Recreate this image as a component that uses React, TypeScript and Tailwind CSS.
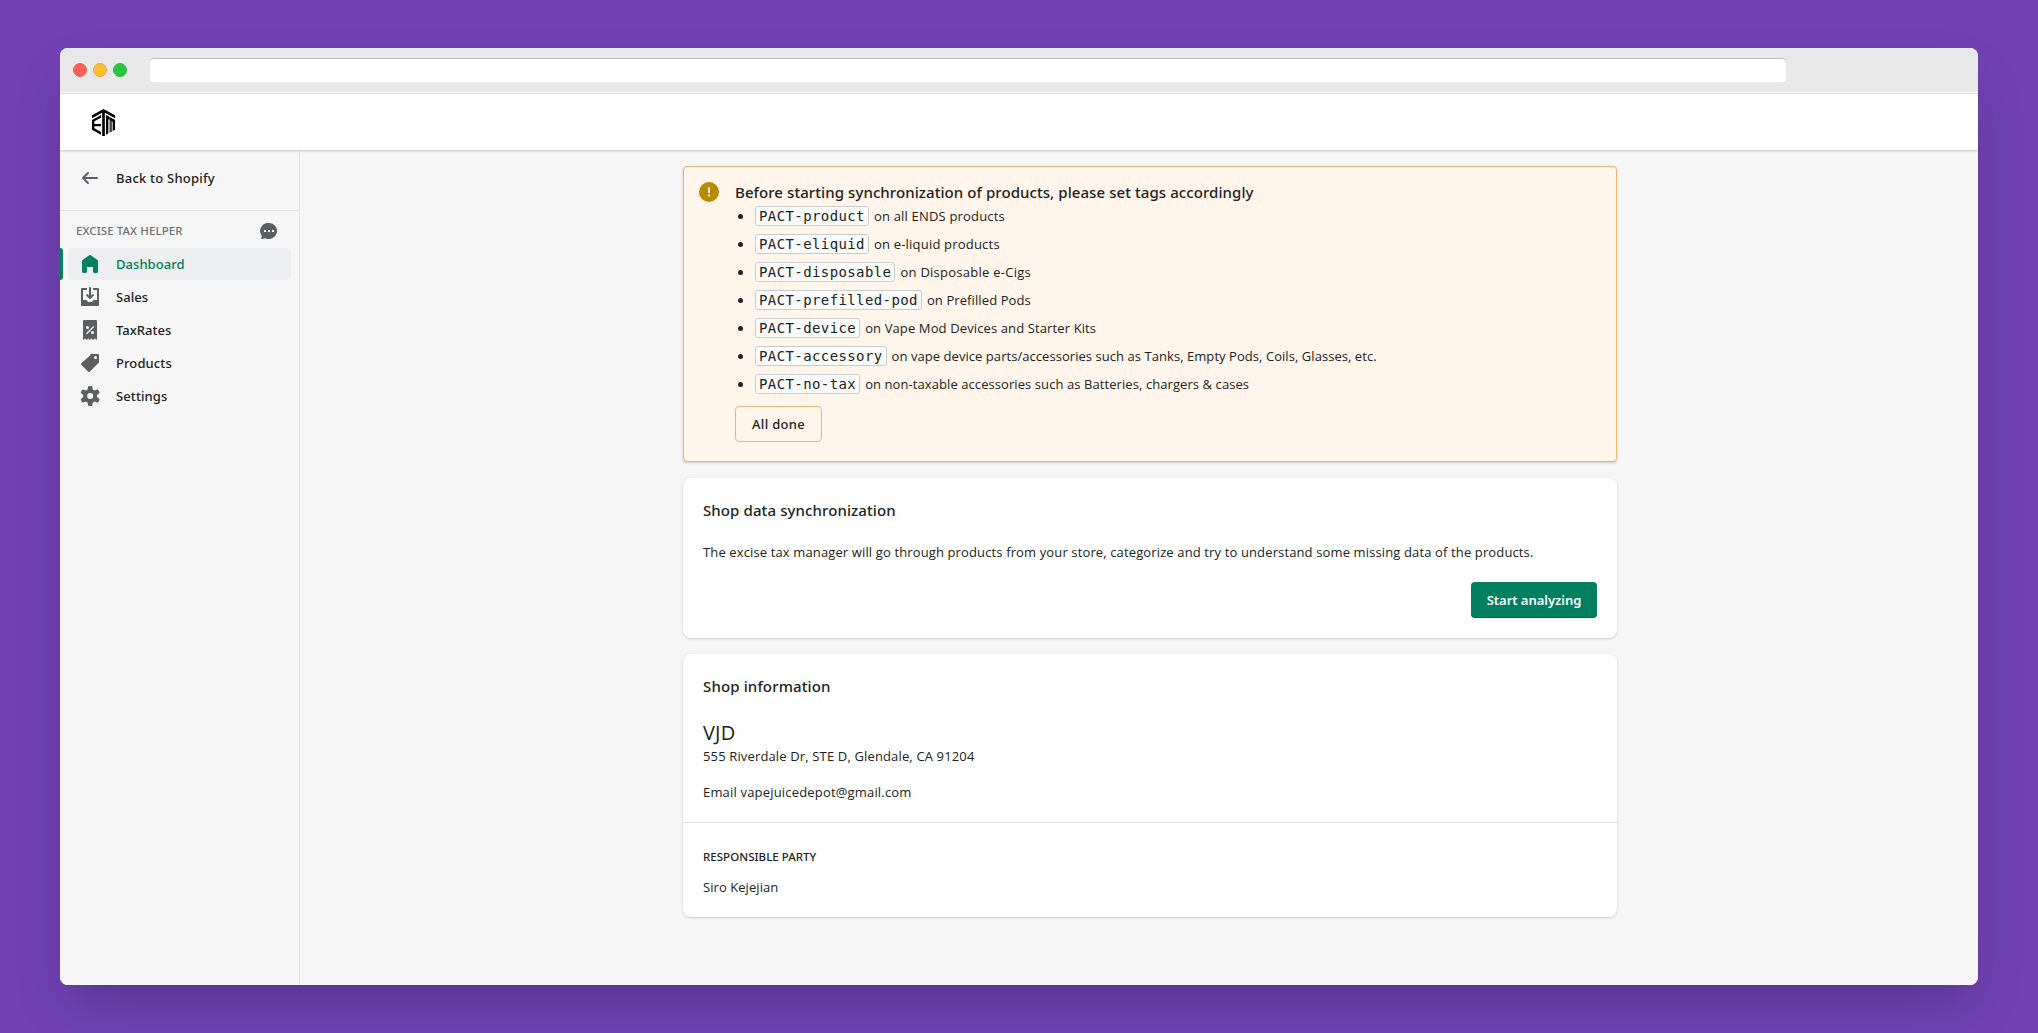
import type { ReactNode } from "react";

const tags: { code: string; text: string; tracking: string }[] = [
  { code: "PACT-product", text: "on all ENDS products", tracking: "tracking-[0.18px]" },
  { code: "PACT-eliquid", text: "on e-liquid products", tracking: "tracking-[0.2px]" },
  { code: "PACT-disposable", text: "on Disposable e-Cigs", tracking: "tracking-[0.26px]" },
  { code: "PACT-prefilled-pod", text: "on Prefilled Pods", tracking: "tracking-[0.1px]" },
  { code: "PACT-device", text: "on Vape Mod Devices and Starter Kits", tracking: "tracking-[0.12px]" },
  {
    code: "PACT-accessory",
    text: "on vape device parts/accessories such as Tanks, Empty Pods, Coils, Glasses, etc.",
    tracking: "tracking-[0.053px]",
  },
  {
    code: "PACT-no-tax",
    text: "on non-taxable accessories such as Batteries, chargers & cases",
    tracking: "tracking-[0.079px]",
  },
];

function Icon({ children, className = "" }: { children: ReactNode; className?: string }) {
  return (
    <svg viewBox="0 0 20 20" className={`size-5 shrink-0 ${className || "fill-[#5c5f62]"}`} fillRule="evenodd">
      {children}
    </svg>
  );
}

function Logo() {
  return (
    <svg viewBox="0 0 69 81" className="h-[27px] w-[23px]" fill="#000">
      <path d="M34.5 0 69 19v9L34.5 9 0 28v-9z" />
      <path d="M30.500 4h8v77h-8z" />
      <path d="M27 18v8L7 37v8h20v7H7v6l20 11v8L0 62V33z" />
      <path d="M42 18l27 15v9L42 27z" />
      <path d="M42 20h7v53l-7 4zM62 32h7v30l-7 4z" />
      <path d="M52 26h3v44l-3 2z" fill="#777" />
      <path d="M55 28h4v40l-4 2z" />
    </svg>
  );
}

function NavItem({ icon, label, tracking, active }: { icon: ReactNode; label: string; tracking: string; active?: boolean }) {
  return (
    <li className="flex h-8">
      <span className={`w-[3px] rounded-r-[3px] ${active ? "bg-[#008060]" : ""}`} />
      <a
        className={`ml-[5px] mr-2 flex flex-1 items-center gap-4 rounded pl-3 ${
          active ? "bg-[#edeeef] text-[#007a5c]" : "text-[#202223]"
        }`}
      >
        {icon}
        <span className={`text-[13px] leading-5 font-medium ${tracking}`}>{label}</span>
      </a>
    </li>
  );
}

function Card({ children }: { children: ReactNode }) {
  return (
    <section className="rounded-lg bg-white shadow-[0_0_5px_rgba(23,24,24,0.05),0_1px_2px_rgba(0,0,0,0.15)]">
      {children}
    </section>
  );
}

export default function App() {
  return (
    <div className="h-[1033px] w-[2038px] overflow-hidden bg-[#7242b5] px-[60px] pt-12 font-['Noto_Sans','Open_Sans',sans-serif] text-[#202223]">
      <div className="flex h-[937px] flex-col overflow-hidden rounded-lg bg-[#f6f6f6] shadow-2xl">
        <div className="flex h-11 shrink-0 items-center bg-[#e8e8e8] pl-[13px]">
          <div className="flex gap-[6px]">
            <span className="size-[14px] rounded-full border border-[#e0635b] bg-[#ff5f57]" />
            <span className="size-[14px] rounded-full border border-[#e1a73e] bg-[#ffbd2e]" />
            <span className="size-[14px] rounded-full border border-[#2fb344] bg-[#28c940]" />
          </div>
          <div className="ml-[23px] h-6 w-[1636px] rounded bg-white shadow-[inset_0_1px_0_#bcbcbc]" />
        </div>
        <div className="h-px shrink-0 bg-[#f8f8f8]" />
        <div className="h-px shrink-0 bg-[#dcdcdc]" />
        <header className="z-10 flex h-14 shrink-0 items-center bg-white pl-8 shadow-[0_1px_2px_rgba(0,0,0,0.2)]">
          <Logo />
        </header>

        <div className="flex flex-1 bg-[#f6f6f6]">
          <nav className="w-60 border-r border-[#e1e3e5] pt-3">
            <div className="flex h-8 items-center gap-4 pl-5">
              <Icon>
                <path d="M17 9H5.414l3.293-3.293a.999.999 0 1 0-1.414-1.414l-5 5a.999.999 0 0 0 0 1.414l5 5a.997.997 0 0 0 1.414 0 .999.999 0 0 0 0-1.414L5.414 11H17a1 1 0 1 0 0-2z" />
              </Icon>
              <span className="text-[13px] leading-5 font-medium tracking-[0.22px]">Back to Shopify</span>
            </div>
            <div className="mt-4 border-t border-[#e1e3e5]" />
            <div className="mt-2.5 flex h-5 items-center justify-between pl-4 pr-5">
              <span className="text-[11.5px] leading-5 font-medium tracking-[0.07px] text-[#6d7175]">
                EXCISE TAX HELPER
              </span>
              <Icon>
                <path d="M10 2a8 8 0 1 1-3.600 15.140c-.9.500-2.400.860-4.400.860.500-.900.700-2.100.6-3.400A8 8 0 0 1 10 2zM5 9v2h2V9zm4 0v2h2V9zm4 0v2h2V9z" />
              </Icon>
            </div>
            <ul className="mt-[7px] flex flex-col gap-px">
              <NavItem
                active
                label="Dashboard"
                tracking="tracking-[0.05px]"
                icon={
                  <Icon className="fill-[#008060]">
                    <path d="M18 7.261V17.500c0 .841-.672 1.500-1.500 1.500h-2c-.828 0-1.500-.659-1.500-1.500V13H7v4.477C7 18.318 6.328 19 5.500 19h-2c-.828 0-1.500-.682-1.500-1.523V7.261a1.500 1.500 0 0 1 .615-1.210l6.590-4.820a1.481 1.481 0 0 1 1.590 0l6.590 4.820A1.500 1.500 0 0 1 18 7.260z" />
                  </Icon>
                }
              />
              <NavItem
                label="Sales"
                tracking="tracking-[0.05px]"
                icon={
                  <Icon>
                    <path d="M2 1h5v2H3v10h3.500L8 15h4l1.500-2H17V3h-4V1h5a1 1 0 0 1 1 1v16a1 1 0 0 1-1 1H2a1 1 0 0 1-1-1V2a1 1 0 0 1 1-1z" />
                    <path d="M10 0a1 1 0 0 1 1 1v7.600l1.300-1.300a1 1 0 0 1 1.400 1.400l-3 3a1 1 0 0 1-1.400 0l-3-3a1 1 0 0 1 1.400-1.400L9 8.600V1a1 1 0 0 1 1-1z" />
                  </Icon>
                }
              />
              <NavItem
                label="TaxRates"
                tracking="tracking-[0.02px]"
                icon={
                  <Icon>
                    <path d="M4 0h12a1 1 0 0 1 1 1v19l-2-1.600L13.300 20l-1.700-1.600L10 20l-1.600-1.600L6.700 20 5 18.400 3 20V1a1 1 0 0 1 1-1zm3.500 9a1.500 1.500 0 1 0 0-3 1.500 1.500 0 0 0 0 3zm5 5a1.500 1.500 0 1 0 0-3 1.500 1.500 0 0 0 0 3zm.8-7.900-7.200 7.200.9.900 7.200-7.200z" />
                  </Icon>
                }
              />
              <NavItem
                label="Products"
                tracking="tracking-[0.1px]"
                icon={
                  <Icon>
                    <path d="M10.293 1.293A1 1 0 0 1 11 1h7a1 1 0 0 1 1 1v7a1 1 0 0 1-.293.707l-9 9a1 1 0 0 1-1.414 0l-7-7a1 1 0 0 1 0-1.414l9-8zM15.500 6a1.500 1.500 0 1 0 0-3 1.500 1.500 0 0 0 0 3z" />
                  </Icon>
                }
              />
              <NavItem
                label="Settings"
                tracking="tracking-[0.1px]"
                icon={
                  <Icon>
                    <path d="M9.027 0a1 1 0 0 0-.99.859l-.37 2.598A6.993 6.993 0 0 0 5.742 4.570l-2.437-.980a1 1 0 0 0-1.239.428L.934 5.981a1 1 0 0 0 .248 1.287l2.066 1.621a7.060 7.060 0 0 0 0 2.222l-2.066 1.621a1 1 0 0 0-.248 1.287l1.132 1.962a1 1 0 0 0 1.239.428l2.438-.979a6.995 6.995 0 0 0 1.923 1.113l.372 2.598a1 1 0 0 0 .990.859h2.265a1 1 0 0 0 .990-.859l.371-2.598a6.995 6.995 0 0 0 1.924-1.112l2.438.978a1 1 0 0 0 1.238-.428l1.133-1.962a1 1 0 0 0-.249-1.287l-2.065-1.621a7.063 7.063 0 0 0 0-2.222l2.065-1.621a1 1 0 0 0 .249-1.287l-1.133-1.962a1 1 0 0 0-1.239-.428l-2.437.979a6.994 6.994 0 0 0-1.924-1.113L12.283.860a1 1 0 0 0-.990-.859H9.027zm1.133 13a3 3 0 1 0 0-6 3 3 0 0 0 0 6z" />
                  </Icon>
                }
              />
            </ul>
          </nav>

          <main className="flex-1 pl-[383px] pt-4">
            <div className="flex w-[934px] flex-col gap-4">
              <section className="flex gap-4 rounded border border-[#e1b878] bg-[#fff5ea] px-[15px] pt-[15px] pb-[19px] shadow-[0_0_5px_rgba(23,24,24,0.05),0_1px_2px_rgba(0,0,0,0.15)]">
                <svg viewBox="0 0 20 20" className="size-5 shrink-0">
                  <circle cx="10" cy="10" r="10" fill="#b98900" />
                  <path d="M9 5.500h2v5.500H9zM9 12.500h2v2H9z" fill="#fff5ea" />
                </svg>
                <div>
                  <h2 className="text-[15px] leading-5 font-medium tracking-[0.074px]">
                    Before starting synchronization of products, please set tags accordingly
                  </h2>
                  <ul>
                    {tags.map((tag) => (
                      <li key={tag.code} className="flex h-7 items-center">
                        <span className="ml-[3px] mr-3 size-[5px] rounded-full bg-[#202223]" />
                        <code className="h-5 rounded-[3px] border border-[#c9cccf] bg-[#fafbfb] px-[3px] font-['DejaVu_Sans_Mono',monospace] text-[14px] leading-[18px] tracking-[0.4px]">
                          {tag.code}
                        </code>
                        <span className={`ml-[5px] font-['Open_Sans',sans-serif] text-[13px] leading-5 ${tag.tracking}`}>
                          {tag.text}
                        </span>
                      </li>
                    ))}
                  </ul>
                  <button className="mt-2 block h-9 w-[87px] rounded border border-[#e1b878] text-[13px] leading-5 font-medium tracking-[0.3px]">
                    All done
                  </button>
                </div>
              </section>

              <Card>
                <div className="flex flex-col gap-5 p-5">
                  <h2 className="text-[15px] leading-6 font-medium tracking-[0.1px]">Shop data synchronization</h2>
                  <p className="font-['Open_Sans',sans-serif] text-[13px] leading-5 tracking-[0.129px]">
                    The excise tax manager will go through products from your store, categorize and try to understand
                    some missing data of the products.
                  </p>
                  <button className="h-9 w-[126px] self-end rounded bg-[#008060] text-[13px] leading-5 font-semibold tracking-[-0.036px] text-white shadow-[inset_0_-1px_0_rgba(0,0,0,0.2)]">
                    Start analyzing
                  </button>
                </div>
              </Card>

              <Card>
                <div className="p-5">
                  <h2 className="text-[15px] leading-6 font-medium tracking-[0.13px]">Shop information</h2>
                  <div className="mt-5 font-['Open_Sans',sans-serif] text-[13px] leading-5">
                    <p className="pt-0.5 text-[20px] leading-[26px] tracking-[0.2px]">VJD</p>
                    <p className="tracking-[0.146px]">555 Riverdale Dr, STE D, Glendale, CA 91204</p>
                    <p className="mt-4 tracking-[0.18px]">Email vapejuicedepot@gmail.com</p>
                  </div>
                </div>
                <div className="border-t border-[#e1e3e5] px-5 pt-[25px] pb-5">
                  <h3 className="text-[11.5px] leading-[17px] font-medium tracking-[0.03px]">RESPONSIBLE PARTY</h3>
                  <p className="mt-3 font-['Open_Sans',sans-serif] text-[13px] leading-5 tracking-[0.06px]">
                    Siro Kejejian
                  </p>
                </div>
              </Card>
            </div>
          </main>
        </div>
      </div>
    </div>
  );
}
